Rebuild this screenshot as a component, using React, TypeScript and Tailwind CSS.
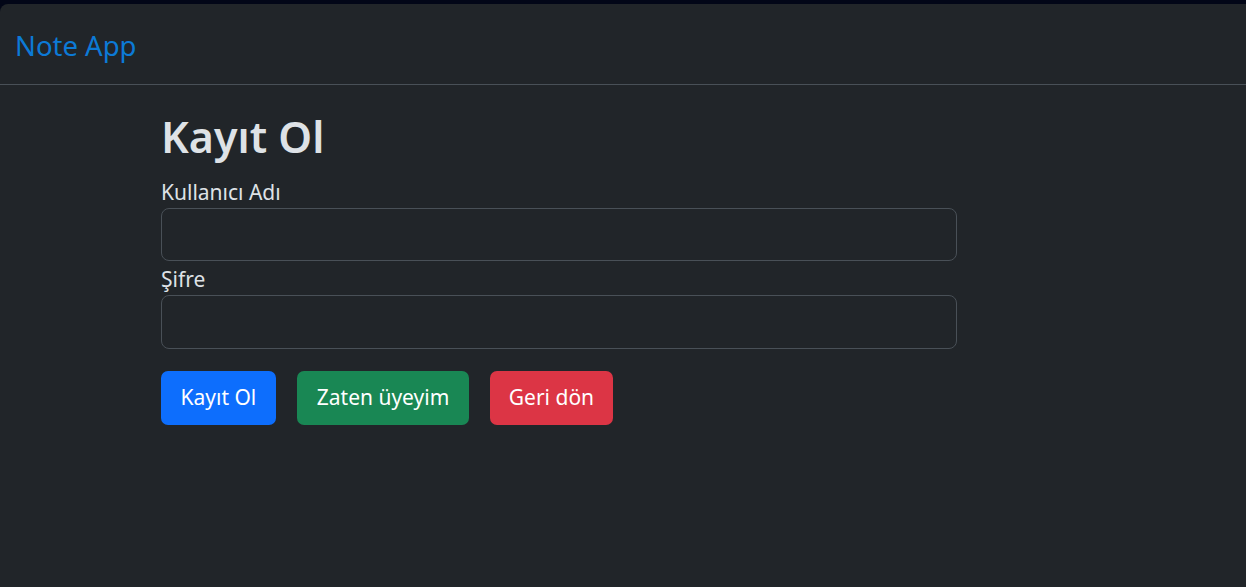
export default function App() {
  return (
    <div className="min-h-[587px] bg-[#020617] pt-[4px] font-['Noto_Sans',sans-serif]">
      <div className="min-h-[583px] rounded-tl-[8px] bg-[#212529] text-[#dee2e6]">
        {/* Navbar */}
        <nav className="flex h-[81px] items-center border-b border-[#495057] px-[15px] pt-[3px]">
          <a href="#" className="text-[27.5px] text-[#0c7ad6]">
            Note App
          </a>
        </nav>

        {/* Register form */}
        <section className="pl-[161px] pt-[22px]">
          <h1 className="text-[43px] font-semibold leading-[60px]">Kayıt Ol</h1>
          <form className="mt-[12px] w-[796px]">
            <label className="block text-[21px] leading-[26px]">Kullanıcı Adı</label>
            <input
              type="text"
              className="mt-[3px] block h-[53px] w-full rounded-[8px] border border-[#495057] bg-[#212529] px-4 outline-none"
            />
            <label className="mt-[5px] block text-[21px] leading-[26px]">Şifre</label>
            <input
              type="password"
              className="mt-[3px] block h-[54px] w-full rounded-[8px] border border-[#495057] bg-[#212529] px-4 outline-none"
            />
            <div className="mt-[22px] flex gap-[21px]">
              <button type="button" className="h-[54px] rounded-[7px] bg-[#0d6efd] px-[19.5px] text-[21px] text-white">
                Kayıt Ol
              </button>
              <button type="button" className="h-[54px] rounded-[7px] bg-[#198754] px-[20px] text-[21px] text-white">
                Zaten üyeyim
              </button>
              <button type="button" className="h-[54px] rounded-[7px] bg-[#dc3545] px-[18.5px] text-[21px] text-white">
                Geri dön
              </button>
            </div>
          </form>
        </section>
      </div>
    </div>
  );
}
